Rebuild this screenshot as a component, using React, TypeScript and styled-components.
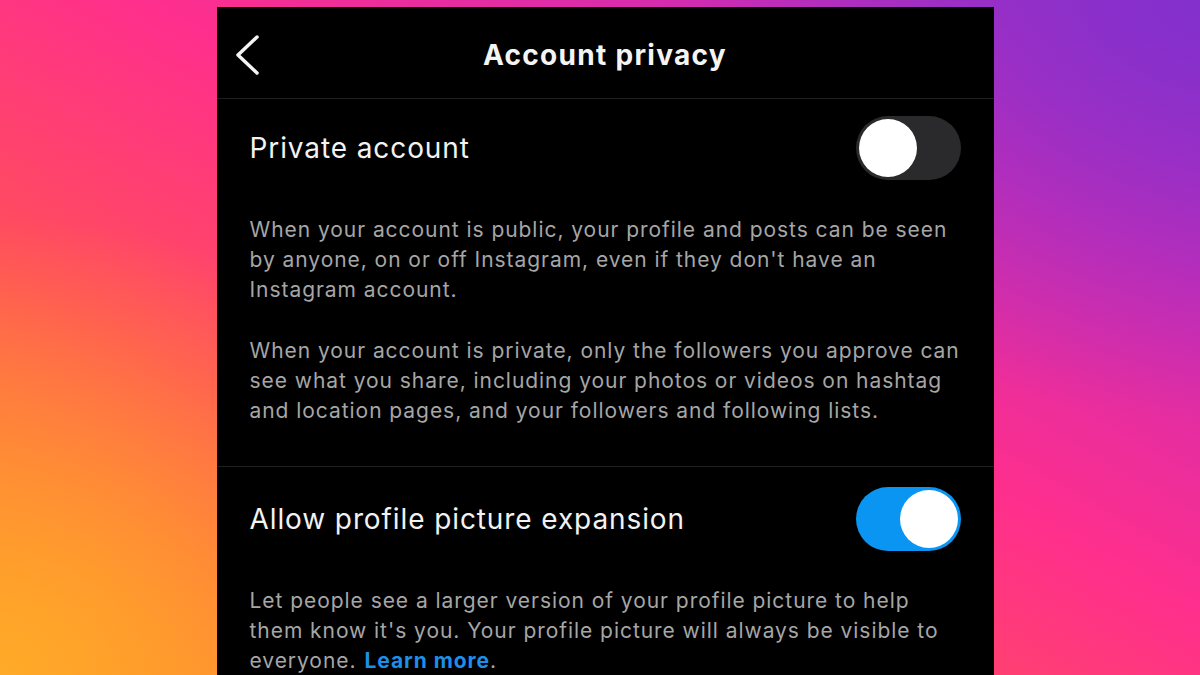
import React from "react";
import styled, { createGlobalStyle } from "styled-components";

const Global = createGlobalStyle`
  html, body { margin: 0; padding: 0; }
  body {
    width: 1200px;
    height: 675px;
    overflow: hidden;
    font-family: Inter, "Noto Sans", sans-serif;
  }
`;

const Stage = styled.div`
  width: 1200px;
  height: 675px;
  overflow: hidden;
  display: flex;
  justify-content: center;
  align-items: flex-start;
  background:
    radial-gradient(ellipse 520px 420px at 1200px 0px, rgba(130, 48, 205, 0.95), rgba(130, 48, 205, 0) 100%),
    radial-gradient(ellipse 520px 460px at 0px 675px, rgba(255, 170, 40, 1), rgba(255, 170, 40, 0) 100%),
    linear-gradient(30deg, #ff8a2a 0%, #ff4f5a 30%, #ff2f8c 55%, #d42caf 78%, #9a2fc8 100%);
`;

const Phone = styled.div`
  width: 777px;
  margin-top: 7px;
  margin-left: 10px;
  background: #000;
  display: flex;
  flex-direction: column;
  min-height: 700px;
  flex-shrink: 0;
`;

const Header = styled.header`
  flex-shrink: 0;
  height: 87px;
  display: grid;
  grid-template-columns: 80px 1fr 80px;
  align-items: center;
  border-bottom: 1px solid #1f1f1f;
  padding-top: 4px;
`;

const Back = styled.div`
  display: flex;
  align-items: center;
  padding-left: 17px;
`;

const Title = styled.h1`
  margin: 0;
  text-align: center;
  color: #f4f4f4;
  font-size: 28px;
  font-weight: 700;
  letter-spacing: 1.3px;
`;

const Section = styled.section<{ $divider?: boolean; $top?: number }>`
  flex-shrink: 0;
  padding: ${(p) => p.$top ?? 0}px 33px 40px;
  border-bottom: ${(p) => (p.$divider ? "1px solid #1f1f1f" : "none")};
`;

const Row = styled.div`
  height: 98px;
  display: flex;
  align-items: center;
  justify-content: space-between;
`;

const Label = styled.span`
  color: #f2f2f2;
  font-size: 28px;
  font-weight: 400;
  letter-spacing: 0.9px;
`;

const Track = styled.div<{ $on: boolean }>`
  width: 105px;
  height: 64px;
  border-radius: 32px;
  background: ${(p) => (p.$on ? "#0b95f2" : "#2a2a2c")};
  display: flex;
  align-items: center;
  justify-content: ${(p) => (p.$on ? "flex-end" : "flex-start")};
  padding: 0 3px;
  box-sizing: border-box;
`;

const Knob = styled.div`
  width: 58px;
  height: 58px;
  border-radius: 50%;
  background: #fff;
`;

const Desc = styled.p`
  margin: 18px 0 0;
  color: #a6a6a6;
  font-size: 21px;
  line-height: 30px;
  letter-spacing: 0.95px;
  & + & {
    margin-top: 31px;
  }
`;

const Line = styled.span`
  display: block;
  white-space: nowrap;
`;

const Link = styled.a`
  color: #1d8fe8;
  font-weight: 700;
  text-decoration: none;
  margin-left: 8px;
`;

const Toggle = ({ on }: { on: boolean }) => (
  <Track $on={on}>
    <Knob />
  </Track>
);

export default function App() {
  return (
    <Stage>
      <Global />
      <Phone>
        <Header>
          <Back>
            <svg width="30" height="42" viewBox="0 0 30 42">
              <path d="M23 3 L4 21 L23 39" fill="none" stroke="#f4f4f4" strokeWidth="3.5" strokeLinecap="round" strokeLinejoin="round" />
            </svg>
          </Back>
          <Title>Account privacy</Title>
          <div />
        </Header>
        <Section $divider>
          <Row>
            <Label>Private account</Label>
            <Toggle on={false} />
          </Row>
          <Desc>
            <Line>When your account is public, your profile and posts can be seen</Line>
            <Line>by anyone, on or off Instagram, even if they don't have an</Line>
            <Line>Instagram account.</Line>
          </Desc>
          <Desc>
            <Line>When your account is private, only the followers you approve can</Line>
            <Line>see what you share, including your photos or videos on hashtag</Line>
            <Line>and location pages, and your followers and following lists.</Line>
          </Desc>
        </Section>
        <Section $top={3}>
          <Row>
            <Label>Allow profile picture expansion</Label>
            <Toggle on={true} />
          </Row>
          <Desc>
            <Line>Let people see a larger version of your profile picture to help</Line>
            <Line>them know it's you. Your profile picture will always be visible to</Line>
            <Line>
              everyone.<Link>Learn more</Link>.
            </Line>
          </Desc>
        </Section>
      </Phone>
    </Stage>
  );
}
